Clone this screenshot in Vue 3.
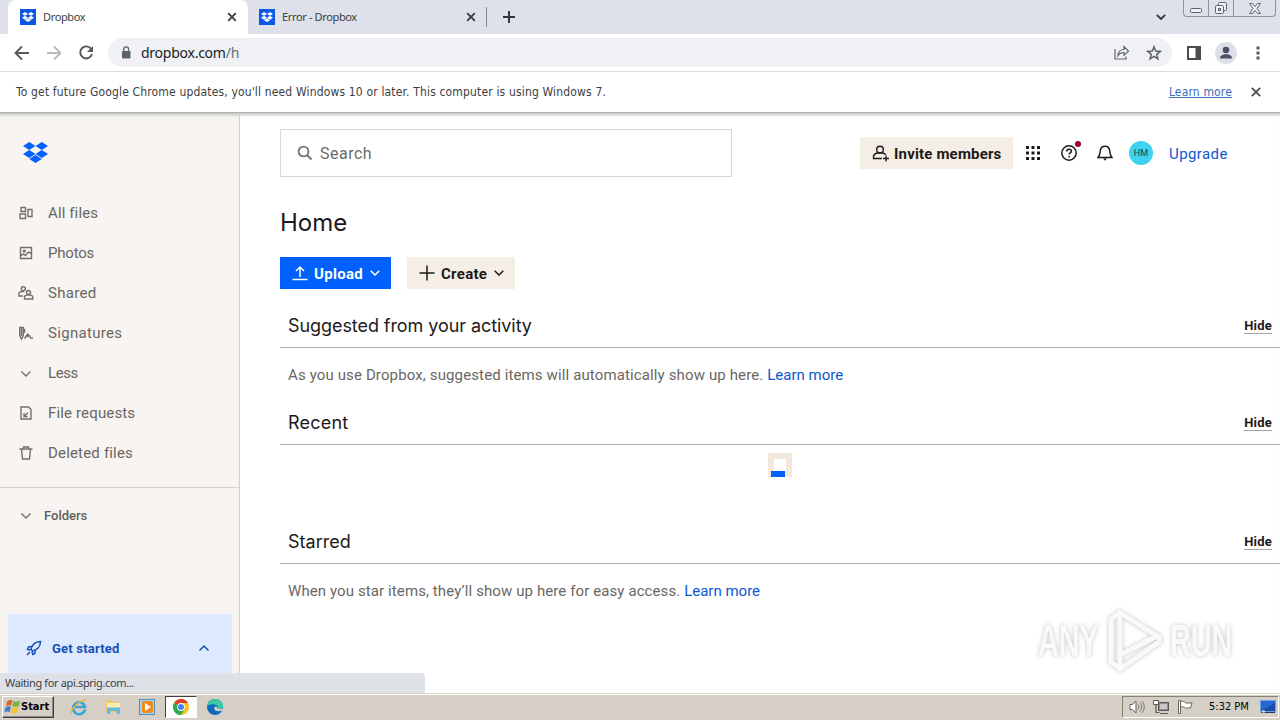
<template>
	<div class="desktop">
		<header class="tab-strip">
			<div v-for="(tab, i) in tabs" :key="tab" class="tab" :class="{ 'active': i === 0 }">
				<span class="favicon">
					<svg viewBox="0 0 24 20"><path :d="dropboxPath" fill="#fff" /></svg>
				</span>
				<span class="tab-title">{{ tab }}</span>
				<svg class="tab-close" viewBox="0 0 10 10"><path d="M1.200 1.200l7.600 7.600M8.800 1.200L1.200 8.800" stroke="#3c4043" stroke-width="1.900" /></svg>
			</div>
			<span class="tab-divider"></span>
			<svg class="new-tab" viewBox="0 0 12 12"><path d="M6 0v12M0 6h12" stroke="#33363b" stroke-width="2" /></svg>
			<svg class="tab-search" viewBox="0 0 10 6"><path d="M.8.8L5 5 9.200.8" fill="none" stroke="#33363b" stroke-width="1.800" /></svg>
			<div class="window-buttons">
				<span class="minimize"><svg viewBox="0 0 12 5"><rect x=".5" y=".5" width="11" height="4" rx="1" /></svg></span>
				<span class="restore">
					<svg viewBox="0 0 14 14">
						<rect x="4.500" y="1.500" width="8" height="8" rx="1" />
						<rect x="1.500" y="4.500" width="8" height="8" rx="1" />
						<rect x="4.500" y="7.500" width="2" height="2" />
					</svg>
				</span>
				<span class="close"><svg viewBox="0 0 12 11"><path d="M.5.5h3L6 3.500 8.500.5h3L8 5.500l3.500 5h-3L6 7.500l-2.500 3h-3L4 5.500z" /></svg></span>
			</div>
		</header>

		<div class="toolbar">
			<svg class="nav-icon" viewBox="0 0 16 16"><path d="M15 8H2M8 1.500L1.500 8 8 14.500" fill="none" stroke="#55585c" stroke-width="1.900" /></svg>
			<svg class="nav-icon" viewBox="0 0 16 16"><path d="M1 8h13M8 1.500L14.500 8 8 14.500" fill="none" stroke="#b9babd" stroke-width="1.900" /></svg>
			<svg class="nav-icon" viewBox="0 0 16 16">
				<path d="M13.300 4.200A6 6 0 1 0 14 9" fill="none" stroke="#55585c" stroke-width="1.900" />
				<path d="M15 1v6H9z" fill="#55585c" />
			</svg>
			<div class="omnibox">
				<svg class="lock" viewBox="0 0 10 13">
					<rect x="1" y="5" width="8.500" height="7.500" rx="1" fill="#5f6368" />
					<path d="M2.800 5V3.300a2.400 2.400 0 0 1 4.800 0V5" fill="none" stroke="#5f6368" stroke-width="1.300" />
				</svg>
				<span class="url">dropbox.com<i>/h</i></span>
				<svg class="share" viewBox="0 0 16 15">
					<path d="M1 4v10h11v-2.500" />
					<path d="M4 10.500c.3-4 2.500-6 6-6V1.500l4.500 4.700-4.500 4V7.500c-3 0-4.500.8-6 3z" />
				</svg>
				<svg class="star" viewBox="0 0 16 16"><path d="M8 1.800l1.700 4.300 4.500.3-3.500 2.900 1.200 4.500L8 11.300l-3.900 2.500 1.200-4.500-3.500-2.900 4.500-.3z" /></svg>
			</div>
			<svg class="side-panel" viewBox="0 0 14 14"><rect x="1" y="1" width="12" height="12" fill="none" stroke="#4e4b50" stroke-width="2" /><path d="M8.500 1H13v12H8.500z" fill="#4e4b50" /></svg>
			<span class="profile">
				<svg viewBox="0 0 22 22"><circle cx="11" cy="8" r="3.300" fill="#4a5068" /><path d="M5 16.500c0-3 3-4.300 6-4.300s6 1.300 6 4.300z" fill="#4a5068" /></svg>
			</span>
			<svg class="kebab" viewBox="0 0 4 14"><path d="M.5.5h3v3h-3zM.5 5.500h3v3h-3zM.5 10.500h3v3h-3z" fill="#55585c" /></svg>
		</div>

		<div class="infobar">
			<span class="info-text">To get future Google Chrome updates, you'll need Windows 10 or later. This computer is using Windows 7.</span>
			<a class="info-link">Learn more</a>
			<svg class="info-close" viewBox="0 0 10 10"><path d="M.8.8l8.400 8.400M9.200.8L.8 9.200" stroke="#4d4f52" stroke-width="1.900" /></svg>
		</div>

		<div class="page">
			<aside class="sidebar">
				<svg class="logo" viewBox="0 0 24 20"><path :d="dropboxPath" fill="#0061fe" /></svg>
				<nav class="nav">
					<a v-for="item in navItems" :key="item.label" class="nav-item">
						<svg viewBox="0 0 16 16"><path :d="item.path" /></svg>
						<span :style="{ letterSpacing: item.spacing + 'px' }">{{ item.label }}</span>
					</a>
				</nav>
				<div class="folders">
					<svg viewBox="0 0 16 16"><path d="M3.500 6.500L8 11l4.500-4.500" /></svg>
					<span>Folders</span>
				</div>
				<div class="get-started">
					<svg class="rocket" viewBox="0 0 16 16">
						<path d="M5 9.500C6 5 9.500 1.700 14.500 1.500c0 5-3.500 8.500-8 9.500z" />
						<path d="M5.500 6.500L2.500 7l-1 2.500 3 .5M9.500 10.500l-.7 3-2 1-.8-3M4 12l-3 3" />
					</svg>
					<span>Get started</span>
					<svg class="caret" viewBox="0 0 16 16"><path d="M3.500 10.500L8 6l4.500 4.500" /></svg>
				</div>
			</aside>

			<main class="main">
				<div class="top-bar">
					<div class="search">
						<svg viewBox="0 0 16 16"><circle cx="6.500" cy="6.500" r="4.900" /><path d="M10 10l4.500 4.500" /></svg>
						<span>Search</span>
					</div>
					<button class="invite">
						<svg viewBox="0 0 18 18">
							<circle cx="8" cy="5.500" r="3.300" />
							<path d="M10 14.500H1.500v-1.700c0-2.200 1.300-3 3.500-3.800h6c1.300.5 2.300 1 2.700 1.700M14 11.500v6M11 14.500h6" />
						</svg>
						<span>Invite members</span>
					</button>
					<svg class="apps" viewBox="0 0 14 14"><path d="M0 0h3v3H0zM5.500 0h3v3h-3zM11 0h3v3h-3zM0 5.500h3v3H0zM5.500 5.500h3v3h-3zM11 5.500h3v3h-3zM0 11h3v3H0zM5.500 11h3v3h-3zM11 11h3v3h-3z" /></svg>
					<span class="help">
						<svg viewBox="0 0 16 16"><circle cx="8" cy="8" r="7.200" /><path d="M5.700 6.500C5.700 3.400 10.400 3.500 10.300 6.200c0 1.700-2.200 1.600-2.200 3.300M8.100 11v1.600" /></svg>
						<i class="badge"></i>
					</span>
					<svg class="bell" viewBox="0 0 16 16"><path d="M1 12.500h14c-2-1.800-1.700-3.500-2.200-6.500C12.400 3 10.700 1.200 8 1.200S3.600 3 3.200 6C2.700 9 3 10.700 1 12.500z" /><path d="M6 13.500h4L8 15.800z" fill="#1e1919" stroke="none" /></svg>
					<span class="avatar">HM</span>
					<a class="upgrade">Upgrade</a>
				</div>

				<h1>Home</h1>

				<div class="actions">
					<button class="upload">
						<svg viewBox="0 0 16 16"><path d="M.5 14.500h15M8 12V2M4 6l4-4 4 4" /></svg>
						<span>Upload</span>
						<svg class="chevron" viewBox="0 0 10 6"><path d="M.7.7L5 5 9.300.7" /></svg>
					</button>
					<button class="create">
						<svg viewBox="0 0 16 16"><path d="M8 .5v15M.5 8h15" /></svg>
						<span>Create</span>
						<svg class="chevron" viewBox="0 0 10 6"><path d="M.7.7L5 5 9.300.7" /></svg>
					</button>
				</div>

				<section v-for="section in sections" :key="section.title" :class="section.name">
					<div class="section-head">
						<h2>{{ section.title }}</h2>
						<a class="hide">Hide</a>
					</div>
					<p v-if="section.text" class="hint"><span>{{ section.text }}</span> <a>Learn more</a></p>
					<div v-else class="loader"><i></i></div>
				</section>
			</main>

			<div class="status">Waiting for api.sprig.com...</div>

			<div class="watermark">
				<span>ANY</span>
				<svg viewBox="0 0 56 64">
					<path d="M13 4v42L50 27zM13 4L4 10v43l9 7 39-27v-7M13 46v14" />
				</svg>
				<span>RUN</span>
			</div>
		</div>

		<footer class="taskbar">
			<button class="start">
				<svg viewBox="0 0 16 16">
					<path d="M3 3C5 1.500 6.500 1.500 8 2.300L6.800 7.300C5 6.500 3.500 6.600 1.800 7.800z" fill="#e8612c" />
					<path d="M9 2.800c2 .8 3.500.8 6.500-.5l-1.500 5.200c-2.200 1.200-4 1-6.200.2z" fill="#79b43c" />
					<path d="M1.500 8.800C3.200 7.600 4.700 7.600 6.500 8.300L5.300 13.300C3.600 12.500 2 12.500 0 13.800z" fill="#3b83d3" />
					<path d="M7.500 8.700c2 .8 3.700.8 6.100-.3l-1.300 5.300c-2.200 1.200-4 1-6.100.2z" fill="#f6c42d" />
				</svg>
				<span>Start</span>
			</button>
			<div class="quick-launch">
				<span class="task">
					<svg viewBox="0 0 18 18">
						<path d="M15 11.500A6 6 0 1 1 15 9H5" fill="none" stroke="#3ca4dc" stroke-width="2.600" />
						<path d="M1.500 15.500C-.5 11 13 0 16.500 2.500" fill="none" stroke="#e5b93b" stroke-width="1.500" />
					</svg>
				</span>
				<span class="task">
					<svg viewBox="0 0 18 18">
						<path d="M2 2h5l1 2h7v10H2z" fill="#e9c96b" />
						<path d="M3 5h13v5H3z" fill="#f8edb1" />
						<path d="M3 9.500h13V16h-3.500v-3h-6v3H3z" fill="#6bb8dc" />
					</svg>
				</span>
				<span class="task">
					<svg viewBox="0 0 18 18">
						<rect x="1.500" y="1.500" width="15" height="15" fill="#a9d0ec" stroke="#518fbd" />
						<rect x="4" y="3" width="11" height="12" rx="2" fill="#f38b1c" />
						<path d="M7 5l6 4-6 4z" fill="#fff" />
					</svg>
				</span>
				<span class="task current">
					<svg viewBox="0 0 18 18">
						<circle cx="9" cy="9" r="8" fill="#fbc116" />
						<path d="M9 9L2.070 5A8 8 0 0 1 15.930 5H9z" fill="#e33b2e" />
						<path d="M9 9L2.070 5A8 8 0 0 0 9 17l3.500-6z" fill="#2da94f" />
						<circle cx="9" cy="9" r="3.900" fill="#fff" />
						<circle cx="9" cy="9" r="3" fill="#4285f4" />
					</svg>
				</span>
				<span class="task">
					<svg viewBox="0 0 18 18">
						<circle cx="9" cy="9" r="8" fill="#0f6cbd" />
						<path d="M1 9C1.300 4 5 1 9 1c5 0 8 3.500 8 6.500 0 3-2.500 4-5.500 3.500 1-3-1-4.500-3.500-4.500C4.500 6 2 7 1 9z" fill="#3cc9a3" />
						<path d="M8.500 9c-1 3 1.500 5 6.500 3.800l1.800.2V10.500c-2 .8-4.500.8-5.300 0 .3-1.500-2-2.800-3-1.500z" fill="#d6d0c7" />
					</svg>
				</span>
			</div>
			<div class="tray">
				<svg viewBox="0 0 16 16">
					<path d="M1 5.500h2.500L7 2v12l-3.500-3.500H1z" fill="#fff" stroke="#66625c" />
					<path d="M9 5.500c1.300 1.500 1.300 3.500 0 5M11 3.500c2.300 2.500 2.300 6.500 0 9M13 2c3 3.500 3 8.500 0 12" fill="none" stroke="#77736d" />
				</svg>
				<svg viewBox="0 0 16 16">
					<rect x="5.500" y="3.500" width="10" height="8" fill="#8c8d8f" stroke="#5a5854" />
					<path d="M7 5h7v5H7z" fill="#c9c9c9" />
					<path d="M7 14.500h8" fill="none" stroke="#5a5854" />
					<path d="M.5 1.500h5v4h-5z" fill="#fff" stroke="#5a5854" />
					<path d="M3 5.500v8h3.500" fill="none" stroke="#5a5854" stroke-width="1.200" />
				</svg>
				<svg viewBox="0 0 16 16">
					<path d="M1.500 1.500h2v13h-2zM3.500 2.500c4-1 4 1.500 6 1.500h5.500l-1.500 5H9.500c-2 0-2-2-6-1z" fill="#fff" stroke="#66625c" />
				</svg>
				<span class="clock">5:32 PM</span>
				<svg class="show-desktop" viewBox="0 0 16 14">
					<rect x=".5" y=".5" width="15" height="11" fill="#2568d2" stroke="#6f9ce0" />
					<path d="M1 11L15 3v8z" fill="#164da6" />
					<path d="M1 12.500h14" stroke="#1c3768" />
					<path d="M2 10.500h3v2H2z" fill="#cfe0f7" />
				</svg>
			</div>
		</footer>
	</div>
</template>

<script setup>
const dropboxPath = 'M6 0l6 3.830-6 3.830-6-3.830zM18 0l6 3.830-6 3.830-6-3.830zM6 7.660l6 3.830-6 3.830-6-3.830zM18 7.660l6 3.830-6 3.830-6-3.830zM12 12.500l6 3.800-6 3.700-6-3.700z';

const tabs = ['Dropbox', 'Error - Dropbox'];

const navItems = [
	{ label: 'All files', spacing: 0.12, path: 'M3 2.500h4.500v4H3zM2 9h5.500v4.500H2zM10 4.500h4v7h-4z' },
	{ label: 'Photos', spacing: -0.2, path: 'M2.500 2.500h11v11h-11zM2.500 10.500l3-1.500 2 1.500 3-3.500 3 1.500M5.500 5.500h1.500v1.200H5.500z' },
	{ label: 'Shared', spacing: 0.3, path: 'M3.300 3.800a2 2 0 1 1 4 0 2 2 0 1 1-4 0M5 11H1V8.500c0-1.200 1-1.700 2.500-2H6M8.500 7.500a2 2 0 1 1 4 0 2 2 0 1 1-4 0M6.500 14v-2c0-1.200 1-1.700 2.500-1.900h3c1.500.2 2.700.7 2.700 1.900v2z' },
	{ label: 'Signatures', spacing: 0.3, path: 'M1.700 2.500h3.600v8L3.500 14l-1.800-3.500zM3.500 2v9M5 4.500h1.500V8M6.500 13.500c4-6 4.500-5.500 3-1.500 3.500-3.500 2 .5 3 1 1 .3 1 .3 2.500 0' },
	{ label: 'Less', spacing: -0.4, path: 'M3.500 6.500L8 11l4.500-4.500' },
	{ label: 'File requests', spacing: 0.15, path: 'M3 2h7.500l2.500 2.500V14H3zM10 7.500L6.500 11M6 8v3.500h3.500' },
	{ label: 'Deleted files', spacing: 0.18, path: 'M1.500 4h13M3.500 4l1 10h7l1-10M5.500 4V2h5v2' },
];

const sections = [
	{ name: 'suggested', title: 'Suggested from your activity', text: 'As you use Dropbox, suggested items will automatically show up here.' },
	{ name: 'recent', title: 'Recent', text: '' },
	{ name: 'starred', title: 'Starred', text: 'When you star items, they’ll show up here for easy access.' },
];
</script>

<style>
body {
	margin: 0;
	overflow: hidden;
}
</style>

<style scoped>
.desktop {
	width: 1280px;
	height: 720px;
	display: flex;
	flex-direction: column;
	overflow: hidden;
	background: #fff;
	font-family: "DejaVu Sans Condensed", "DejaVu Sans", sans-serif;
	font-stretch: condensed;
}

svg {
	display: block;
	flex-shrink: 0;
}

i {
	font-style: normal;
}

button {
	border: 0;
	padding: 0;
	font-family: inherit;
}

.tab-strip {
	height: 34px;
	flex-shrink: 0;
	display: flex;
	align-items: center;
	padding-left: 8px;
	background: #dee1e9;
}

.tab {
	width: 239px;
	height: 34px;
	box-sizing: border-box;
	display: flex;
	align-items: center;
	padding: 0 11px;
}

.tab.active {
	width: 240px;
	padding-left: 12px;
	background: #fff;
	border-radius: 8px 8px 0 0;
}

.favicon {
	width: 16px;
	height: 16px;
	display: flex;
	align-items: center;
	justify-content: center;
	background: #0d57e4;
}

.favicon svg {
	width: 12px;
	height: 10px;
}

.tab-title {
	flex: 1;
	margin-left: 7px;
	padding-bottom: 2px;
	font-family: "Noto Sans", sans-serif;
	font-stretch: normal;
	font-size: 11px;
	letter-spacing: -0.36px;
	color: #3c4043;
}

.tab-close {
	width: 10px;
	height: 10px;
}

.tab-divider {
	width: 1px;
	height: 20px;
	background: #878a91;
	margin-left: -1px;
}

.new-tab {
	width: 12px;
	height: 12px;
	margin-left: 16px;
}

.tab-search {
	width: 10px;
	height: 6px;
	margin-left: auto;
}

.window-buttons {
	display: flex;
	align-self: flex-start;
	height: 17px;
	margin-left: 17px;
	margin-right: 4px;
	box-sizing: border-box;
	border: 1px solid #8f939b;
	border-top: 0;
	border-radius: 0 0 4px 4px;
}

.window-buttons span {
	display: flex;
	align-items: center;
	justify-content: center;
}

.window-buttons svg {
	fill: #eef0f4;
	stroke: #60646c;
	stroke-width: 1;
}

.minimize {
	width: 24px;
	border-right: 1px solid #8f939b;
}

.minimize svg {
	width: 12px;
	height: 5px;
	margin-top: 5px;
}

.restore {
	width: 24px;
	border-right: 1px solid #8f939b;
}

.restore svg {
	width: 14px;
	height: 14px;
}

.close {
	width: 41px;
}

.close svg {
	width: 12px;
	height: 11px;
}

.toolbar {
	height: 38px;
	flex-shrink: 0;
	box-sizing: border-box;
	display: flex;
	align-items: center;
	padding: 0 20px 0 14px;
	border-bottom: 1px solid #dadce0;
}

.nav-icon {
	width: 16px;
	height: 16px;
	margin-right: 16px;
}

.nav-icon:nth-child(3) {
	margin-right: 14px;
}

.omnibox {
	width: 1064px;
	height: 29px;
	flex-shrink: 0;
	box-sizing: border-box;
	display: flex;
	align-items: center;
	padding: 0 10px 0 13px;
	border-radius: 15px;
	background: #eff1f4;
}

.lock {
	width: 10px;
	height: 13px;
}

.url {
	flex: 1;
	margin-left: 10px;
	font-family: "Noto Sans", sans-serif;
	font-stretch: normal;
	font-size: 14px;
	letter-spacing: -0.25px;
	color: #202124;
}

.url i {
	color: #6b6e73;
}

.share {
	width: 16px;
	height: 15px;
	fill: none;
	stroke: #5f6368;
	stroke-width: 1.2;
}

.star {
	width: 16px;
	height: 16px;
	margin-left: 16px;
	fill: none;
	stroke: #5f6368;
	stroke-width: 1.5;
}

.side-panel {
	width: 14px;
	height: 14px;
	margin-left: 15px;
}

.profile {
	width: 22px;
	height: 22px;
	margin-left: 14px;
	border-radius: 50%;
	background: #dcdfe5;
}

.kebab {
	width: 4px;
	height: 14px;
	margin-left: 19px;
}

.infobar {
	height: 41px;
	flex-shrink: 0;
	box-sizing: border-box;
	display: flex;
	align-items: center;
	padding: 0 19px 0 16px;
	border-bottom: 1px solid #b1b3b2;
	font-size: 12px;
	letter-spacing: 0.16px;
	color: #3c3e42;
}

.info-text {
	flex: 1;
}

.info-link {
	color: #3a6db8;
	text-decoration: underline;
}

.info-close {
	width: 10px;
	height: 10px;
	margin-left: 19px;
}

.page {
	height: 580px;
	flex-shrink: 0;
	position: relative;
	display: flex;
	overflow: hidden;
	box-shadow: inset 0 4px 3px -2px #c4c4c0;
	font-family: Roboto, sans-serif;
	font-stretch: normal;
}

.sidebar {
	width: 240px;
	box-sizing: border-box;
	display: flex;
	flex-direction: column;
	background: #f7f4f1;
	border-right: 1px solid #d3d1ce;
	box-shadow: inset 0 4px 3px -2px #c4c4c0;
}

.logo {
	width: 25px;
	height: 21px;
	margin: 29px 0 0 23px;
}

.nav {
	height: 294px;
	margin-top: 30px;
	border-bottom: 1px solid #d3d1ce;
}

.nav-item {
	height: 40px;
	display: flex;
	align-items: center;
	padding-left: 18px;
	font-size: 15px;
	color: #6a6763;
}

.nav-item svg,
.folders svg {
	width: 16px;
	height: 16px;
	fill: none;
	stroke: #736f6b;
	stroke-width: 1.4;
}

.nav-item span {
	margin-left: 14px;
}

.folders {
	height: 20px;
	display: flex;
	align-items: center;
	margin-top: 17px;
	padding-left: 18px;
	font-size: 13px;
	font-weight: 500;
	color: #625f5b;
}

.folders span {
	margin-left: 10px;
}

.get-started {
	height: 68px;
	display: flex;
	align-items: center;
	margin: 89px 7px 0 8px;
	padding: 0 20px 0 18px;
	background: #dde9ff;
	font-size: 13px;
	font-weight: 700;
	letter-spacing: 0.2px;
	color: #1450b5;
}

.get-started span {
	flex: 1;
	margin-left: 10px;
}

.get-started svg {
	width: 16px;
	height: 16px;
	fill: none;
	stroke: #1450b5;
	stroke-width: 1.5;
}

.main {
	flex: 1;
	min-width: 0;
	padding: 16px 0 0 40px;
}

.top-bar {
	height: 48px;
	display: flex;
	align-items: center;
}

.search {
	width: 452px;
	height: 48px;
	box-sizing: border-box;
	display: flex;
	align-items: center;
	padding-left: 16px;
	border: 1px solid #d7d7d7;
	font-size: 16px;
	letter-spacing: 0.5px;
	color: #6d6a66;
}

.search svg {
	width: 16px;
	height: 16px;
	margin-right: 7px;
	fill: none;
	stroke: #7a7774;
	stroke-width: 1.9;
}

.invite {
	width: 153px;
	height: 32px;
	display: flex;
	align-items: center;
	margin-left: 128px;
	padding-left: 12px;
	background: #f5eee6;
	font-size: 15px;
	font-weight: 700;
	letter-spacing: 0.17px;
	color: #1e1919;
	white-space: nowrap;
}

.invite span,
.upgrade {
	padding-top: 1px;
}

.invite svg {
	width: 18px;
	height: 18px;
	margin-right: 4px;
	fill: none;
	stroke: #1e1919;
	stroke-width: 1.4;
}

.apps {
	width: 14px;
	height: 14px;
	margin-left: 13px;
	fill: #1e1919;
}

.help {
	position: relative;
	margin-left: 21px;
}

.help svg,
.bell {
	width: 16px;
	height: 16px;
	fill: none;
	stroke: #1e1919;
	stroke-width: 1.5;
}

.badge {
	position: absolute;
	top: -4px;
	right: -4px;
	width: 6px;
	height: 6px;
	border-radius: 50%;
	background: #9b0032;
}

.bell {
	margin-left: 20px;
}

.avatar {
	width: 24px;
	height: 24px;
	margin-left: 16px;
	border-radius: 50%;
	background: #3dd3ee;
	font-size: 9px;
	line-height: 24px;
	letter-spacing: 0.2px;
	text-align: center;
	color: #16414b;
}

.upgrade {
	margin-left: 16px;
	font-size: 15px;
	letter-spacing: 0.4px;
	color: #0d57d0;
}

h1 {
	margin: 32px 0 0;
	font-family: Inter, sans-serif;
	font-size: 24px;
	line-height: 28px;
	font-weight: 400;
	color: #1e1919;
}

.actions {
	display: flex;
	gap: 16px;
	margin-top: 20px;
}

.actions button {
	height: 32px;
	display: flex;
	align-items: center;
	padding-left: 12px;
	font-size: 15px;
	font-weight: 700;
	letter-spacing: 0.3px;
}

.actions svg {
	width: 16px;
	height: 16px;
	fill: none;
	stroke: currentColor;
	stroke-width: 1.5;
}

.actions span {
	margin: 0 7px 0 6px;
	padding-top: 1px;
}

.actions .chevron {
	width: 10px;
	height: 6px;
}

.actions .upload {
	width: 111px;
	background: #0061fe;
	color: #fff;
}

.actions .create {
	width: 108px;
	background: #f5eee6;
	color: #1e1919;
}

.section-head {
	height: 43px;
	display: flex;
	align-items: center;
	justify-content: space-between;
	padding: 0 8px;
	border-bottom: 1px solid #adadad;
}

h2 {
	margin: 0;
	font-family: Inter, sans-serif;
	font-size: 18px;
	line-height: 24px;
	font-weight: 400;
	color: #1e1919;
}

.hide {
	font-size: 13px;
	line-height: 15px;
	font-weight: 700;
	letter-spacing: 0.2px;
	border-bottom: 1px solid #a5a2a0;
	color: #1e1919;
}

.suggested {
	height: 97px;
	margin-top: 15px;
}

.suggested h2 {
	letter-spacing: -0.07px;
}

.recent {
	height: 119px;
}

.recent h2 {
	letter-spacing: 0.2px;
}

.hint {
	margin: 17px 0 0 8px;
	font-size: 15px;
	line-height: 20px;
	letter-spacing: 0.13px;
	color: #6a6763;
}

.starred .hint {
	letter-spacing: 0.1px;
}

.hint a {
	letter-spacing: 0;
	color: #0d57d0;
}

.loader {
	width: 24px;
	height: 24px;
	box-sizing: border-box;
	display: flex;
	align-items: flex-end;
	margin: 8px 0 0 488px;
	padding: 0 3px;
	background: linear-gradient(#fff, #fff) 6px 6px / 12px 12px no-repeat #f2e8dd;
}

.loader i {
	width: 14px;
	height: 6px;
	background: #0061fe;
}

.status {
	position: absolute;
	left: 0;
	bottom: 0;
	width: 425px;
	height: 20px;
	box-sizing: border-box;
	padding-left: 5px;
	border-radius: 0 4px 0 0;
	background: #dee1e6;
	font-family: "Noto Sans", sans-serif;
	font-size: 11px;
	line-height: 20px;
	letter-spacing: -0.36px;
	color: #3c4043;
}

.watermark {
	position: absolute;
	left: 1038px;
	bottom: 20px;
	display: flex;
	align-items: center;
	gap: 7px;
	font-family: "Liberation Sans", sans-serif;
	font-size: 45px;
	font-weight: 700;
	line-height: 64px;
	color: #f9f9f9;
	filter: drop-shadow(0 0 2px #c4c4c4);
}

.watermark span {
	width: 62px;
	transform: scaleX(0.64);
	transform-origin: left;
}

.watermark svg {
	width: 56px;
	height: 64px;
	fill: none;
	stroke: #f9f9f9;
	stroke-width: 5;
}

.taskbar {
	flex: 1;
	box-sizing: border-box;
	display: flex;
	align-items: center;
	padding: 0 2px 1px;
	border-top: 1px solid #d6d1c9;
	background: #d5cfc6;
	box-shadow: inset 0 1px #fff;
}

.start {
	width: 52px;
	height: 22px;
	box-sizing: border-box;
	display: flex;
	align-items: center;
	padding-left: 1px;
	background: #d5cfc6;
	border: 1px solid;
	border-color: #fff #404040 #404040 #fff;
	box-shadow: inset -1px -1px #8a867f;
	font-family: "DejaVu Sans Condensed", "DejaVu Sans", sans-serif;
	font-stretch: condensed;
	font-size: 11px;
	font-weight: 700;
	color: #000;
}

.start svg {
	width: 17px;
	height: 17px;
}

.quick-launch {
	display: flex;
	margin-left: 8px;
}

.task {
	width: 34px;
	height: 22px;
	box-sizing: border-box;
	display: flex;
	align-items: center;
	justify-content: center;
}

.task.current {
	width: 32px;
	margin: 0 1px;
	background: #fff;
	border: 1px solid;
	border-color: #404040 #fff #fff #404040;
}

.task svg {
	width: 18px;
	height: 18px;
}

.tray {
	height: 22px;
	width: 157px;
	box-sizing: border-box;
	display: flex;
	align-items: center;
	margin-left: auto;
	margin-right: -1px;
	padding-left: 6px;
	padding-right: 2px;
	border: 1px solid;
	border-color: #85817a #fff #fff #85817a;
	font-size: 11px;
	color: #000;
}

.tray svg {
	width: 16px;
	height: 16px;
	margin-right: 8px;
}

.clock {
	flex: 1;
	margin-left: 8px;
	white-space: nowrap;
}

.tray .show-desktop {
	height: 14px;
	margin-right: 0;
}
</style>
